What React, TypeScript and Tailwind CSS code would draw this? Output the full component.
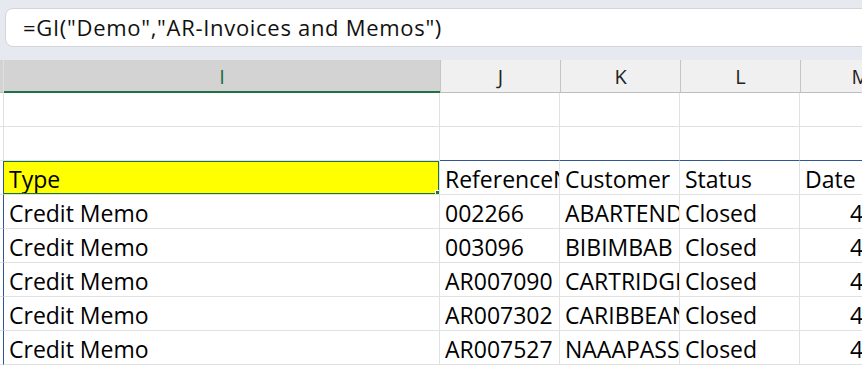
import React from "react";

const cols = [
  { key: "I", w: "w-[436px]" },
  { key: "J", w: "w-[120px]" },
  { key: "K", w: "w-[120px]" },
  { key: "L", w: "w-[120px]" },
  { key: "M", w: "w-[120px]" },
];

type Row = { cells: string[] };

const rows: Row[] = [
  { cells: ["", "", "", "", ""] },
  { cells: ["", "", "", "", ""] },
  { cells: ["Type", "ReferenceNbr", "Customer", "Status", "Date"] },
  { cells: ["Credit Memo", "002266", "ABARTENDE", "Closed", "4/1/2021"] },
  { cells: ["Credit Memo", "003096", "BIBIMBAB", "Closed", "4/1/2021"] },
  { cells: ["Credit Memo", "AR007090", "CARTRIDGE", "Closed", "4/1/2021"] },
  { cells: ["Credit Memo", "AR007302", "CARIBBEAN", "Closed", "4/1/2021"] },
  { cells: ["Credit Memo", "AR007527", "NAAAPASS", "Closed", "4/1/2021"] },
];

export default function App() {
  return (
    <div
      className="w-[862px] h-[365px] overflow-hidden bg-white text-[#000]"
      style={{ fontFamily: '"Open Sans", "Noto Sans", sans-serif' }}
    >
      {/* formula bar */}
      <div className="h-[60px] bg-[#e6e9ef] pt-[8px] pl-[5px]">
        <div className="h-[39px] w-[900px] rounded-[8px] border border-[#d2d4d8] bg-white flex items-center pl-[17px] text-[22px] tracking-[0.7px] text-[#111]">
          =GI("Demo","AR-Invoices and Memos")
        </div>
      </div>

      {/* column headers */}
      <div className="flex h-[33px] w-[920px] bg-[#f0f0f0]">
        <div className="w-[4px] shrink-0 border-r border-[#e0e0e0] border-b border-b-[#bdbdbd] bg-[#d3d3d3]" />
        {cols.map((c) =>
          c.key === "I" ? (
            <div
              key={c.key}
              className={`${c.w} shrink-0 bg-[#d3d3d3] border-b-2 border-[#1e7145] flex items-center justify-center pt-[2px] text-[20px] text-[#1e6b40]`}
            >
              {c.key}
            </div>
          ) : (
            <div
              key={c.key}
              className={`${c.w} shrink-0 border-l border-[#c4c4c4] border-b border-b-[#bdbdbd] flex items-center justify-center pt-[2px] text-[20px] text-[#222]`}
            >
              {c.key}
            </div>
          )
        )}
      </div>

      {/* body */}
      {rows.map((r, ri) => (
        <div key={ri} className="flex h-[34px] w-[920px]">
          <div
            className={`w-[4px] shrink-0 border-b border-[#e1e1e1] border-r ${
              ri >= 2 ? "border-r-[#2f5597]" : "border-r-[#e1e1e1]"
            }`}
          />
          {cols.map((c, ci) => {
            const sel = ri === 2 && ci === 0;
            const blueBottom = ri === 1 && ci > 0;
            const date = ri > 2 && ci === 4;
            return (
              <div
                key={c.key}
                className={`${c.w} shrink-0 relative border-r border-b border-[#e1e1e1] ${
                  blueBottom ? "border-b-[#2f5597]" : ""
                } ${sel ? "bg-[#ffff00]" : ""} flex items-end overflow-hidden whitespace-nowrap text-[23px] leading-[29px] ${
                  date ? "pl-[50px]" : "px-[5px]"
                }`}
              >
                <span className="shrink-0">{r.cells[ci]}</span>
                {sel && (
                  <>
                    <div className="absolute left-[-2px] top-[-1px] right-[-1px] bottom-[-1px] border-2 border-[#1e7145]" />
                    <div className="absolute right-[-5px] bottom-[-5px] w-[9px] h-[9px] bg-[#1e7145] border border-white z-10" />
                  </>
                )}
              </div>
            );
          })}
        </div>
      ))}
    </div>
  );
}
